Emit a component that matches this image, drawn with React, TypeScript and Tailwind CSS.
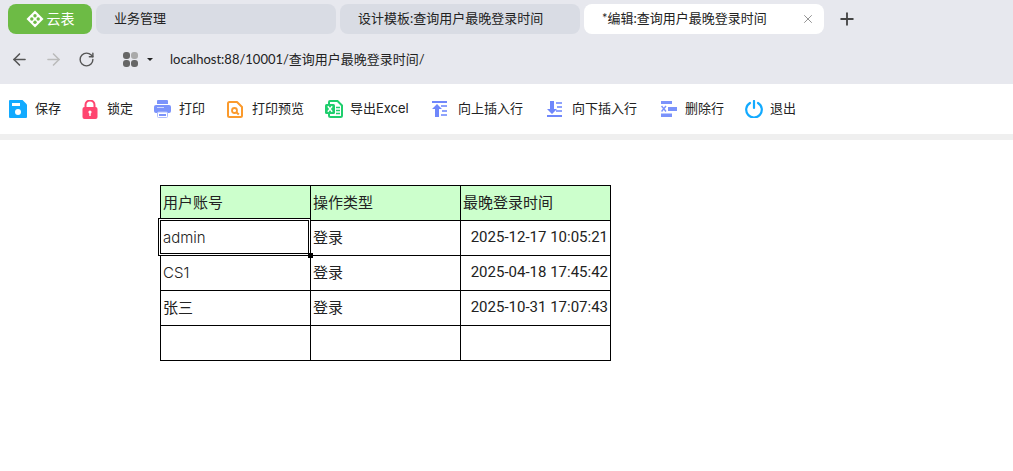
import { ArrowLeft, ArrowRight, Plus, RotateCw, X } from "lucide-react";
import type { ReactNode } from "react";

const font = "font-['Lato','Noto_Sans_CJK_SC',sans-serif]";
const wideLatin = "font-['Inter','Noto_Sans_CJK_SC',sans-serif]";
const timeFont = "font-['Roboto','Noto_Sans_CJK_SC',sans-serif]";

const LogoIcon = () => (
  <svg width="18" height="18" viewBox="0 0 18 18">
    <path d="M9 0.500 17.500 9 9 17.500 0.500 9Z" fill="#fff" />
    <circle cx="9" cy="5.800" r="1.700" fill="#6dbb45" />
    <circle cx="5.800" cy="9" r="1.700" fill="#6dbb45" />
    <circle cx="12.200" cy="9" r="1.700" fill="#6dbb45" />
    <circle cx="9" cy="12.200" r="1.700" fill="#6dbb45" />
  </svg>
);

const SaveIcon = () => (
  <svg width="18" height="18" viewBox="0 0 18 18">
    <path d="M1 0h12.500L18 4.500V17a1 1 0 0 1-1 1H1a1 1 0 0 1-1-1V1a1 1 0 0 1 1-1Z" fill="#12aaff" />
    <rect x="3" y="3" width="8" height="3" fill="#fff" />
    <circle cx="9" cy="12" r="3" fill="#fff" />
  </svg>
);

const LockIcon = () => (
  <svg width="16" height="19" viewBox="0 0 16 19">
    <path d="M3.500 8V5a4.500 4.500 0 0 1 9 0v3" fill="none" stroke="#ff4570" strokeWidth="2" />
    <rect x="0.500" y="7" width="15" height="12" rx="2" fill="#ff4570" />
    <circle cx="8" cy="12" r="1.600" fill="#fff" />
    <rect x="7.300" y="12" width="1.400" height="4" fill="#fff" />
  </svg>
);

const PrintIcon = () => (
  <svg width="17" height="18" viewBox="0 0 17 18">
    <path d="M4 0h9a1 1 0 0 1 1 1v3H3V1a1 1 0 0 1 1-1Z" fill="#7b93fb" />
    <rect x="0" y="5" width="17" height="8" rx="2" fill="#7b93fb" />
    <rect x="3" y="7" width="7" height="1" fill="#cdd6fe" />
    <rect x="3.500" y="12" width="10" height="5.500" rx="1" fill="#fff" stroke="#aebcfd" />
    <rect x="5" y="14" width="7" height="2" fill="#7b93fb" />
  </svg>
);

const PreviewIcon = () => (
  <svg width="16" height="17" viewBox="0 0 16 17">
    <path d="M2.500 1h7.500l5 5v8.500a1.500 1.500 0 0 1-1.500 1.500h-11A1.500 1.500 0 0 1 1 14.500v-12A1.500 1.500 0 0 1 2.500 1Z" fill="none" stroke="#fb9a2c" strokeWidth="2" strokeLinejoin="round" />
    <circle cx="7.500" cy="9.500" r="2.500" fill="none" stroke="#fb9a2c" strokeWidth="1.800" />
    <path d="M9.300 11.300 11.800 13.600" stroke="#fb9a2c" strokeWidth="2" />
  </svg>
);

const ExcelIcon = () => (
  <svg width="18" height="18" viewBox="0 0 18 18">
    <path d="M5 1h7.500L17 5.500V15.500a1.500 1.500 0 0 1-1.500 1.500h-10A1.500 1.500 0 0 1 4 15.500V2a1 1 0 0 1 1-1Z" fill="#fff" stroke="#1fce6d" strokeWidth="2" />
    <rect x="0" y="4" width="10" height="10" rx="1.500" fill="#1fce6d" />
    <path d="M2.800 6.300 7.200 11.700M7.200 6.300 2.800 11.700" stroke="#fff" strokeWidth="1.400" />
    <path d="M11 7.500h4M11 10.500h4M11 13.500h4" stroke="#1fce6d" strokeWidth="1.500" />
  </svg>
);

const InsertUpIcon = () => (
  <svg width="16" height="16" viewBox="0 0 16 16">
    <rect x="0" y="0" width="15" height="2" fill="#6f87fb" />
    <path d="M5 3 10 8H7v8H3V8H0Z" fill="#6f87fb" />
    <path d="M9 4h6v2H9ZM10 9h5v2h-5ZM9 13h6v2H9Z" fill="#8ea2fc" />
  </svg>
);

const InsertDownIcon = () => (
  <svg width="15" height="16" viewBox="0 0 15 16">
    <rect x="0" y="14" width="15" height="2" fill="#6f87fb" />
    <path d="M5 13 0 8H3V0h4v8h3Z" fill="#6f87fb" />
    <path d="M9 1h6v2H9ZM10 5h5v2h-5ZM9 9h6v2H9Z" fill="#8ea2fc" />
  </svg>
);

const DeleteRowIcon = () => (
  <svg width="16" height="16" viewBox="0 0 16 16">
    <rect x="0" y="0" width="11" height="3" fill="#7b93fb" />
    <rect x="7" y="6" width="9" height="4" fill="#7b93fb" />
    <rect x="0" y="12.500" width="11" height="3.500" fill="#7b93fb" />
    <path d="M.500 5 5 10.500M5 5 .500 10.500" stroke="#7b93fb" strokeWidth="1.500" />
  </svg>
);

const PowerIcon = () => (
  <svg width="18" height="18" viewBox="0 0 18 18">
    <path d="M5 3a7.800 7.800 0 1 0 8 0" fill="none" stroke="#12aaff" strokeWidth="2.200" strokeLinecap="round" />
    <path d="M9 1v7" stroke="#12aaff" strokeWidth="2.200" strokeLinecap="round" />
  </svg>
);

const tools: { icon: ReactNode; label: ReactNode; key: string; box: string; iconBox: string }[] = [
  { key: "save", icon: <SaveIcon />, label: "保存", box: "w-[73px]", iconBox: "w-[26px]" },
  { key: "lock", icon: <LockIcon />, label: "锁定", box: "w-[72px]", iconBox: "w-[25px]" },
  { key: "print", icon: <PrintIcon />, label: "打印", box: "w-[73px]", iconBox: "w-[25px]" },
  { key: "preview", icon: <PreviewIcon />, label: "打印预览", box: "w-[98px]", iconBox: "w-[25px]" },
  { key: "excel", icon: <ExcelIcon />, label: <span className={wideLatin}>导出Excel</span>, box: "w-[107px]", iconBox: "w-[25px]" },
  { key: "up", icon: <InsertUpIcon />, label: "向上插入行", box: "w-[115px]", iconBox: "w-[26px]" },
  { key: "down", icon: <InsertDownIcon />, label: "向下插入行", box: "w-[114px]", iconBox: "w-[25px]" },
  { key: "del", icon: <DeleteRowIcon />, label: "删除行", box: "w-[84px]", iconBox: "w-[24px]" },
  { key: "exit", icon: <PowerIcon />, label: "退出", box: "w-[60px]", iconBox: "w-[25px]" },
];

const rows = [
  { account: "admin", type: "登录", time: "2025-12-17 10:05:21" },
  { account: "CS1", type: "登录", time: "2025-04-18 17:45:42" },
  { account: "张三", type: "登录", time: "2025-10-31 17:07:43" },
  { account: "", type: "", time: "" },
];

const cell = "h-[35px] w-[150px] border border-black px-[2px] pt-0 pb-[2px] text-[15px] leading-none text-[#222]";

export default function App() {
  return (
    <div className={`h-[471px] w-[1013px] overflow-hidden bg-white ${font}`}>
      {/* browser chrome */}
      <div className="h-[84px] bg-[#e7e8ee]">
        <div className="flex items-center gap-1 px-2 pt-1">
          <div className="flex h-[30px] w-[84px] items-center justify-center gap-[3px] rounded-lg bg-[#6dbb45] text-sm text-white">
            <LogoIcon />
            <span>云表</span>
          </div>
          <div className="flex h-[30px] w-[240px] items-center rounded-lg bg-[#d9dce4] pl-[18px] text-[13px] text-[#222]">业务管理</div>
          <div className="flex h-[30px] w-[240px] items-center rounded-lg bg-[#d9dce4] pl-[18px] text-[13px] text-[#222]">设计模板:查询用户最晚登录时间</div>
          <div className="flex h-[30px] w-[240px] items-center justify-between rounded-lg bg-white pl-[18px] pr-[9px] text-[13px] text-[#222]">
            <span>*编辑:查询用户最晚登录时间</span>
            <X size={14} strokeWidth={1.200} className="text-[#666]" />
          </div>
          <Plus size={20} strokeWidth={2.200} className="ml-[9px] text-[#444]" />
        </div>
        <div className="flex h-[50px] items-center pl-[10px]">
          <ArrowLeft size={19} strokeWidth={2} className="text-[#555]" />
          <ArrowRight size={19} strokeWidth={2} className="ml-[15px] text-[#bbb]" />
          <RotateCw size={17} strokeWidth={2} className="ml-[15px] text-[#555]" />
          <div className="ml-[28px] grid h-[15px] w-[15px] grid-cols-2 gap-[1px]">
            <span className="rounded-[3px] bg-[#666]" />
            <span className="rounded-[3px] bg-[#aaa]" />
            <span className="rounded-[3px] bg-[#666]" />
            <span className="rounded-[3px] bg-[#666]" />
          </div>
          <span className="ml-[9px] h-0 w-0 border-x-[3px] border-t-[3px] border-x-transparent border-t-[#222]" />
          <span className="ml-[17px] mt-[2px] text-[13px] text-[#222]">localhost:88/10001/查询用户最晚登录时间/</span>
        </div>
      </div>

      {/* toolbar */}
      <div className="flex h-[56px] items-center border-b-[6px] border-[#efefef] pl-[9px] text-[13px] text-[#222]">
        {tools.map((t) => (
          <div key={t.key} className={`flex items-center ${t.box}`}>
            <span className={`flex items-center ${t.iconBox}`}>{t.icon}</span>
            <span>{t.label}</span>
          </div>
        ))}
      </div>

      {/* sheet */}
      <div className="pl-[160px] pt-[45px]">
        <table className="table-fixed border-collapse">
          <tbody>
            <tr className="bg-[#ccffcc]">
              <td className={cell}>用户账号</td>
              <td className={cell}>操作类型</td>
              <td className={cell}>最晚登录时间</td>
            </tr>
            {rows.map((r, i) => (
              <tr key={i}>
                <td className={`${cell} ${wideLatin} ${i < 2 ? "font-light" : ""} ${i === 0 ? "relative" : ""}`}>
                  {r.account}
                  {i === 0 && (
                    <span className="absolute -left-[3px] -top-[3px] h-[38px] w-[153px] border border-black">
                      <span className="absolute inset-0 border border-white">
                        <span className="absolute inset-0 border border-black" />
                      </span>
                      <span className="absolute -bottom-[3px] -right-[3px] h-[5px] w-[5px] bg-black" />
                    </span>
                  )}
                </td>
                <td className={cell}>{r.type}</td>
                <td className={`${cell} ${timeFont} text-right`}>{r.time}</td>
              </tr>
            ))}
          </tbody>
        </table>
      </div>
    </div>
  );
}
